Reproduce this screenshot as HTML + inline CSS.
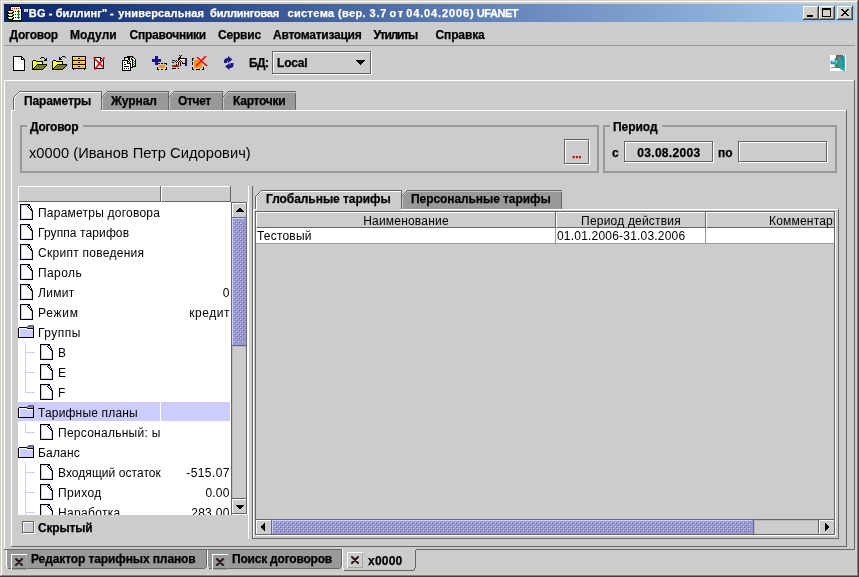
<!DOCTYPE html>
<html><head><meta charset="utf-8"><title>BG - биллинг</title>
<style>
html,body{margin:0;padding:0;background:#d4d0c8;overflow:hidden}
#w{position:relative;width:859px;height:577px;overflow:hidden;font-family:"Liberation Sans",sans-serif;font-size:12px;color:#000}
#g{position:absolute;left:0;top:0}
.t{position:absolute;white-space:nowrap;line-height:16px;font-size:12px}
.b{font-weight:bold;letter-spacing:-0.2px;-webkit-text-stroke:0.25px}
.p{font-weight:normal;letter-spacing:0.2px}
#lt{position:absolute;left:18px;top:202px;width:213px;height:313px;overflow:hidden;will-change:transform}
#tx{position:absolute;left:0;top:0;width:859px;height:577px;will-change:transform}
#lt .t{margin-left:-18px;margin-top:-202px}
</style></head><body>
<div id="w">
<svg id="g" width="859" height="577" viewBox="0 0 859 577" shape-rendering="crispEdges">
<rect x="0" y="0" width="859" height="577" fill="#d4d0c8"/>
<rect x="1" y="1" width="856" height="1" fill="#ffffff"/>
<rect x="1" y="1" width="1" height="574" fill="#ffffff"/>
<rect x="1" y="575" width="857" height="1" fill="#808080"/>
<rect x="857" y="1" width="1" height="575" fill="#808080"/>
<rect x="0" y="576" width="859" height="1" fill="#404040"/>
<rect x="858" y="0" width="1" height="577" fill="#404040"/>
<defs><linearGradient id="tg" x1="0" x2="1" y1="0" y2="0"><stop offset="0" stop-color="#0a246a"/><stop offset="1" stop-color="#a6caf0"/></linearGradient><pattern id="bumpv" x="234" y="221" width="4" height="4" patternUnits="userSpaceOnUse"><rect x="0" y="0" width="1" height="1" fill="#ccccff"/><rect x="2" y="2" width="1" height="1" fill="#ccccff"/><rect x="1" y="1" width="1" height="1" fill="#666699"/><rect x="3" y="3" width="1" height="1" fill="#666699"/></pattern><pattern id="bumph" x="275" y="522" width="4" height="4" patternUnits="userSpaceOnUse"><rect x="0" y="0" width="1" height="1" fill="#ccccff"/><rect x="2" y="2" width="1" height="1" fill="#ccccff"/><rect x="1" y="1" width="1" height="1" fill="#666699"/><rect x="3" y="3" width="1" height="1" fill="#666699"/></pattern></defs>
<rect x="4" y="4" width="851" height="18" fill="url(#tg)"/>
<rect x="4" y="22" width="851" height="551" fill="#cccccc"/>
<rect x="803" y="6" width="16" height="14" fill="#d4d0c8"/>
<rect x="803" y="6" width="15" height="1" fill="#ffffff"/>
<rect x="803" y="6" width="1" height="13" fill="#ffffff"/>
<rect x="803" y="19" width="16" height="1" fill="#404040"/>
<rect x="818" y="6" width="1" height="14" fill="#404040"/>
<rect x="804" y="18" width="14" height="1" fill="#808080"/>
<rect x="817" y="7" width="1" height="12" fill="#808080"/>
<rect x="819" y="6" width="16" height="14" fill="#d4d0c8"/>
<rect x="819" y="6" width="15" height="1" fill="#ffffff"/>
<rect x="819" y="6" width="1" height="13" fill="#ffffff"/>
<rect x="819" y="19" width="16" height="1" fill="#404040"/>
<rect x="834" y="6" width="1" height="14" fill="#404040"/>
<rect x="820" y="18" width="14" height="1" fill="#808080"/>
<rect x="833" y="7" width="1" height="12" fill="#808080"/>
<rect x="837" y="6" width="16" height="14" fill="#d4d0c8"/>
<rect x="837" y="6" width="15" height="1" fill="#ffffff"/>
<rect x="837" y="6" width="1" height="13" fill="#ffffff"/>
<rect x="837" y="19" width="16" height="1" fill="#404040"/>
<rect x="852" y="6" width="1" height="14" fill="#404040"/>
<rect x="838" y="18" width="14" height="1" fill="#808080"/>
<rect x="851" y="7" width="1" height="12" fill="#808080"/>
<rect x="807" y="15" width="6" height="2" fill="#000"/>
<rect x="822" y="8" width="9" height="9" fill="#000"/>
<rect x="823" y="10" width="7" height="6" fill="#d4d0c8"/>
<rect x="841" y="9" width="2" height="1" fill="#000"/>
<rect x="847" y="9" width="2" height="1" fill="#000"/>
<rect x="842" y="10" width="2" height="1" fill="#000"/>
<rect x="846" y="10" width="2" height="1" fill="#000"/>
<rect x="843" y="11" width="2" height="1" fill="#000"/>
<rect x="845" y="11" width="2" height="1" fill="#000"/>
<rect x="844" y="12" width="2" height="1" fill="#000"/>
<rect x="844" y="12" width="2" height="1" fill="#000"/>
<rect x="845" y="13" width="2" height="1" fill="#000"/>
<rect x="843" y="13" width="2" height="1" fill="#000"/>
<rect x="846" y="14" width="2" height="1" fill="#000"/>
<rect x="842" y="14" width="2" height="1" fill="#000"/>
<rect x="847" y="15" width="2" height="1" fill="#000"/>
<rect x="841" y="15" width="2" height="1" fill="#000"/>
<rect x="10" y="6" width="11" height="15" fill="#000"/>
<rect x="11" y="7" width="9" height="13" fill="#ffffff"/>
<rect x="20" y="8" width="2" height="13" fill="#000"/>
<rect x="20" y="9" width="1" height="11" fill="#ffffff"/>
<rect x="12" y="8" width="1" height="1" fill="#ff0000"/>
<rect x="14" y="8" width="1" height="1" fill="#ff0000"/>
<rect x="16" y="8" width="1" height="1" fill="#ff0000"/>
<rect x="18" y="8" width="1" height="1" fill="#ff0000"/>
<rect x="15" y="11" width="1" height="1" fill="#000"/>
<rect x="17" y="11" width="3" height="1" fill="#008000"/>
<rect x="18" y="10" width="1" height="3" fill="#008000"/>
<rect x="15" y="14" width="1" height="1" fill="#000"/>
<rect x="17" y="14" width="3" height="1" fill="#008000"/>
<rect x="18" y="13" width="1" height="3" fill="#008000"/>
<rect x="15" y="17" width="1" height="1" fill="#000"/>
<rect x="17" y="17" width="3" height="1" fill="#008000"/>
<rect x="18" y="16" width="1" height="3" fill="#008000"/>
<rect x="8" y="10" width="5" height="4" fill="#000"/>
<rect x="7" y="11" width="7" height="2" fill="#000"/>
<rect x="8" y="11" width="3" height="1" fill="#ffffff"/>
<rect x="11" y="11" width="2" height="1" fill="#ffff00"/>
<rect x="9" y="12" width="3" height="1" fill="#ffff00"/>
<rect x="8" y="13" width="5" height="4" fill="#000"/>
<rect x="7" y="14" width="7" height="2" fill="#000"/>
<rect x="8" y="14" width="3" height="1" fill="#ffffff"/>
<rect x="11" y="14" width="2" height="1" fill="#ffff00"/>
<rect x="9" y="15" width="3" height="1" fill="#ffff00"/>
<rect x="8" y="16" width="5" height="4" fill="#000"/>
<rect x="7" y="17" width="7" height="2" fill="#000"/>
<rect x="8" y="17" width="3" height="1" fill="#ffffff"/>
<rect x="11" y="17" width="2" height="1" fill="#ffff00"/>
<rect x="9" y="18" width="3" height="1" fill="#ffff00"/>
<rect x="4" y="45" width="851" height="1" fill="#999999"/>
<rect x="4" y="80" width="850" height="1" fill="#ffffff"/>
<rect x="4" y="80" width="1" height="469" fill="#ffffff"/>
<rect x="854" y="80" width="1" height="470" fill="#666666"/>
<rect x="4" y="549" width="851" height="1" fill="#666666"/>
<rect x="11" y="110" width="835" height="1" fill="#ffffff"/>
<polygon points="14,111 14,98 20,92 101,92 101,111" fill="#cccccc"/>
<rect x="13" y="97" width="1" height="1" fill="#666666"/>
<rect x="14" y="96" width="1" height="1" fill="#666666"/>
<rect x="15" y="95" width="1" height="1" fill="#666666"/>
<rect x="16" y="94" width="1" height="1" fill="#666666"/>
<rect x="17" y="93" width="1" height="1" fill="#666666"/>
<rect x="18" y="92" width="1" height="1" fill="#666666"/>
<rect x="19" y="91" width="1" height="1" fill="#666666"/>
<rect x="13" y="97" width="1" height="13" fill="#666666"/>
<rect x="19" y="91" width="83" height="1" fill="#666666"/>
<rect x="101" y="91" width="1" height="19" fill="#666666"/>
<rect x="15" y="96" width="1" height="1" fill="#ffffff"/>
<rect x="16" y="95" width="1" height="1" fill="#ffffff"/>
<rect x="17" y="94" width="1" height="1" fill="#ffffff"/>
<rect x="18" y="93" width="1" height="1" fill="#ffffff"/>
<rect x="19" y="92" width="1" height="1" fill="#ffffff"/>
<rect x="19" y="92" width="82" height="1" fill="#ffffff"/>
<rect x="14" y="97" width="1" height="14" fill="#ffffff"/>
<polygon points="102,110 102,98 108,92 168,92 168,110" fill="#999999"/>
<rect x="101" y="97" width="1" height="1" fill="#666666"/>
<rect x="102" y="96" width="1" height="1" fill="#666666"/>
<rect x="103" y="95" width="1" height="1" fill="#666666"/>
<rect x="104" y="94" width="1" height="1" fill="#666666"/>
<rect x="105" y="93" width="1" height="1" fill="#666666"/>
<rect x="106" y="92" width="1" height="1" fill="#666666"/>
<rect x="107" y="91" width="1" height="1" fill="#666666"/>
<rect x="107" y="91" width="62" height="1" fill="#666666"/>
<rect x="168" y="91" width="1" height="19" fill="#666666"/>
<rect x="103" y="96" width="1" height="1" fill="#c6c6c6"/>
<rect x="104" y="95" width="1" height="1" fill="#c6c6c6"/>
<rect x="105" y="94" width="1" height="1" fill="#c6c6c6"/>
<rect x="106" y="93" width="1" height="1" fill="#c6c6c6"/>
<rect x="107" y="92" width="1" height="1" fill="#c6c6c6"/>
<rect x="107" y="92" width="61" height="1" fill="#c6c6c6"/>
<rect x="102" y="98" width="1" height="12" fill="#c6c6c6"/>
<polygon points="169,110 169,98 175,92 222,92 222,110" fill="#999999"/>
<rect x="168" y="97" width="1" height="1" fill="#666666"/>
<rect x="169" y="96" width="1" height="1" fill="#666666"/>
<rect x="170" y="95" width="1" height="1" fill="#666666"/>
<rect x="171" y="94" width="1" height="1" fill="#666666"/>
<rect x="172" y="93" width="1" height="1" fill="#666666"/>
<rect x="173" y="92" width="1" height="1" fill="#666666"/>
<rect x="174" y="91" width="1" height="1" fill="#666666"/>
<rect x="174" y="91" width="49" height="1" fill="#666666"/>
<rect x="222" y="91" width="1" height="19" fill="#666666"/>
<rect x="170" y="96" width="1" height="1" fill="#c6c6c6"/>
<rect x="171" y="95" width="1" height="1" fill="#c6c6c6"/>
<rect x="172" y="94" width="1" height="1" fill="#c6c6c6"/>
<rect x="173" y="93" width="1" height="1" fill="#c6c6c6"/>
<rect x="174" y="92" width="1" height="1" fill="#c6c6c6"/>
<rect x="174" y="92" width="48" height="1" fill="#c6c6c6"/>
<rect x="169" y="98" width="1" height="12" fill="#c6c6c6"/>
<polygon points="223,110 223,98 229,92 295,92 295,110" fill="#999999"/>
<rect x="222" y="97" width="1" height="1" fill="#666666"/>
<rect x="223" y="96" width="1" height="1" fill="#666666"/>
<rect x="224" y="95" width="1" height="1" fill="#666666"/>
<rect x="225" y="94" width="1" height="1" fill="#666666"/>
<rect x="226" y="93" width="1" height="1" fill="#666666"/>
<rect x="227" y="92" width="1" height="1" fill="#666666"/>
<rect x="228" y="91" width="1" height="1" fill="#666666"/>
<rect x="228" y="91" width="68" height="1" fill="#666666"/>
<rect x="295" y="93" width="1" height="17" fill="#666666"/>
<rect x="224" y="96" width="1" height="1" fill="#c6c6c6"/>
<rect x="225" y="95" width="1" height="1" fill="#c6c6c6"/>
<rect x="226" y="94" width="1" height="1" fill="#c6c6c6"/>
<rect x="227" y="93" width="1" height="1" fill="#c6c6c6"/>
<rect x="228" y="92" width="1" height="1" fill="#c6c6c6"/>
<rect x="228" y="92" width="68" height="1" fill="#c6c6c6"/>
<rect x="223" y="98" width="1" height="12" fill="#c6c6c6"/>
<rect x="11" y="110" width="1" height="436" fill="#ffffff"/>
<rect x="846" y="110" width="1" height="437" fill="#666666"/>
<rect x="11" y="546" width="836" height="1" fill="#666666"/>
<rect x="20" y="125" width="2" height="48" fill="#999999"/>
<rect x="597" y="125" width="2" height="48" fill="#999999"/>
<rect x="20" y="171" width="579" height="2" fill="#999999"/>
<rect x="20" y="125" width="7" height="2" fill="#999999"/>
<rect x="83" y="125" width="516" height="2" fill="#999999"/>
<rect x="603" y="125" width="2" height="48" fill="#999999"/>
<rect x="835" y="125" width="2" height="48" fill="#999999"/>
<rect x="603" y="171" width="234" height="2" fill="#999999"/>
<rect x="603" y="125" width="7" height="2" fill="#999999"/>
<rect x="662" y="125" width="175" height="2" fill="#999999"/>
<rect x="564" y="139" width="25" height="1" fill="#666666"/>
<rect x="564" y="139" width="1" height="25" fill="#666666"/>
<rect x="564" y="163" width="25" height="1" fill="#666666"/>
<rect x="588" y="139" width="1" height="25" fill="#666666"/>
<rect x="565" y="140" width="23" height="1" fill="#ffffff"/>
<rect x="565" y="140" width="1" height="23" fill="#ffffff"/>
<rect x="565" y="164" width="25" height="1" fill="#ffffff"/>
<rect x="589" y="140" width="1" height="25" fill="#ffffff"/>
<rect x="624" y="141" width="89" height="1" fill="#666666"/>
<rect x="624" y="141" width="1" height="21" fill="#666666"/>
<rect x="624" y="161" width="89" height="1" fill="#666666"/>
<rect x="712" y="141" width="1" height="21" fill="#666666"/>
<rect x="625" y="142" width="87" height="1" fill="#ffffff"/>
<rect x="625" y="142" width="1" height="19" fill="#ffffff"/>
<rect x="625" y="162" width="89" height="1" fill="#ffffff"/>
<rect x="713" y="142" width="1" height="21" fill="#ffffff"/>
<rect x="738" y="141" width="89" height="1" fill="#666666"/>
<rect x="738" y="141" width="1" height="21" fill="#666666"/>
<rect x="738" y="161" width="89" height="1" fill="#666666"/>
<rect x="826" y="141" width="1" height="21" fill="#666666"/>
<rect x="739" y="142" width="87" height="1" fill="#ffffff"/>
<rect x="739" y="142" width="1" height="19" fill="#ffffff"/>
<rect x="739" y="162" width="89" height="1" fill="#ffffff"/>
<rect x="827" y="142" width="1" height="21" fill="#ffffff"/>
<rect x="272" y="51" width="99" height="1" fill="#666666"/>
<rect x="272" y="51" width="1" height="23" fill="#666666"/>
<rect x="272" y="73" width="99" height="1" fill="#666666"/>
<rect x="370" y="51" width="1" height="23" fill="#666666"/>
<rect x="273" y="52" width="97" height="1" fill="#ffffff"/>
<rect x="273" y="52" width="1" height="21" fill="#ffffff"/>
<rect x="273" y="74" width="99" height="1" fill="#ffffff"/>
<rect x="371" y="52" width="1" height="23" fill="#ffffff"/>
<polygon points="355,60 365,60 360,65" fill="#000"/>
<rect x="18" y="202" width="213" height="313" fill="#ffffff"/>
<rect x="18" y="186" width="143" height="16" fill="#cccccc"/>
<rect x="18" y="186" width="142" height="1" fill="#ffffff"/>
<rect x="18" y="186" width="1" height="15" fill="#ffffff"/>
<rect x="160" y="186" width="1" height="16" fill="#666666"/>
<rect x="19" y="201" width="142" height="1" fill="#666666"/>
<rect x="161" y="186" width="70" height="16" fill="#cccccc"/>
<rect x="161" y="186" width="69" height="1" fill="#ffffff"/>
<rect x="161" y="186" width="1" height="15" fill="#ffffff"/>
<rect x="230" y="186" width="1" height="16" fill="#666666"/>
<rect x="162" y="201" width="69" height="1" fill="#666666"/>
<rect x="18" y="402" width="142" height="19" fill="#ccccff"/>
<rect x="161" y="402" width="69" height="19" fill="#ccccff"/>
<clipPath id="lc"><rect x="18" y="202" width="213" height="313"/></clipPath><g clip-path="url(#lc)">
<rect x="25" y="342" width="1" height="51" fill="#ccccff"/>
<rect x="25" y="352" width="10" height="1" fill="#ccccff"/>
<rect x="25" y="372" width="10" height="1" fill="#ccccff"/>
<rect x="25" y="392" width="10" height="1" fill="#ccccff"/>
<rect x="25" y="422" width="1" height="11" fill="#ccccff"/>
<rect x="25" y="432" width="10" height="1" fill="#ccccff"/>
<rect x="25" y="462" width="1" height="59" fill="#ccccff"/>
<rect x="25" y="472" width="10" height="1" fill="#ccccff"/>
<rect x="25" y="492" width="10" height="1" fill="#ccccff"/>
<rect x="25" y="512" width="10" height="1" fill="#ccccff"/>
<rect x="21" y="205" width="11" height="14" fill="#ffffff"/>
<rect x="21" y="205" width="1" height="14" fill="#ccccff"/>
<rect x="21" y="205" width="7" height="1" fill="#ccccff"/>
<rect x="31" y="211" width="1" height="8" fill="#ccccff"/>
<rect x="21" y="218" width="11" height="1" fill="#ccccff"/>
<rect x="28" y="206" width="1" height="1" fill="#ccccff"/>
<rect x="29" y="207" width="1" height="1" fill="#ccccff"/>
<rect x="30" y="208" width="1" height="1" fill="#ccccff"/>
<rect x="20" y="204" width="1" height="16" fill="#000"/>
<rect x="20" y="204" width="10" height="1" fill="#000"/>
<rect x="20" y="219" width="13" height="1" fill="#000"/>
<rect x="32" y="210" width="1" height="10" fill="#000"/>
<rect x="27" y="206" width="1" height="1" fill="#000"/>
<rect x="28" y="207" width="1" height="1" fill="#000"/>
<rect x="29" y="208" width="1" height="1" fill="#000"/>
<rect x="30" y="209" width="1" height="1" fill="#000"/>
<rect x="31" y="210" width="1" height="1" fill="#000"/>
<rect x="28" y="205" width="2" height="1" fill="#000"/>
<rect x="30" y="206" width="1" height="2" fill="#000"/>
<rect x="31" y="208" width="1" height="2" fill="#000"/>
<rect x="21" y="225" width="11" height="14" fill="#ffffff"/>
<rect x="21" y="225" width="1" height="14" fill="#ccccff"/>
<rect x="21" y="225" width="7" height="1" fill="#ccccff"/>
<rect x="31" y="231" width="1" height="8" fill="#ccccff"/>
<rect x="21" y="238" width="11" height="1" fill="#ccccff"/>
<rect x="28" y="226" width="1" height="1" fill="#ccccff"/>
<rect x="29" y="227" width="1" height="1" fill="#ccccff"/>
<rect x="30" y="228" width="1" height="1" fill="#ccccff"/>
<rect x="20" y="224" width="1" height="16" fill="#000"/>
<rect x="20" y="224" width="10" height="1" fill="#000"/>
<rect x="20" y="239" width="13" height="1" fill="#000"/>
<rect x="32" y="230" width="1" height="10" fill="#000"/>
<rect x="27" y="226" width="1" height="1" fill="#000"/>
<rect x="28" y="227" width="1" height="1" fill="#000"/>
<rect x="29" y="228" width="1" height="1" fill="#000"/>
<rect x="30" y="229" width="1" height="1" fill="#000"/>
<rect x="31" y="230" width="1" height="1" fill="#000"/>
<rect x="28" y="225" width="2" height="1" fill="#000"/>
<rect x="30" y="226" width="1" height="2" fill="#000"/>
<rect x="31" y="228" width="1" height="2" fill="#000"/>
<rect x="21" y="245" width="11" height="14" fill="#ffffff"/>
<rect x="21" y="245" width="1" height="14" fill="#ccccff"/>
<rect x="21" y="245" width="7" height="1" fill="#ccccff"/>
<rect x="31" y="251" width="1" height="8" fill="#ccccff"/>
<rect x="21" y="258" width="11" height="1" fill="#ccccff"/>
<rect x="28" y="246" width="1" height="1" fill="#ccccff"/>
<rect x="29" y="247" width="1" height="1" fill="#ccccff"/>
<rect x="30" y="248" width="1" height="1" fill="#ccccff"/>
<rect x="20" y="244" width="1" height="16" fill="#000"/>
<rect x="20" y="244" width="10" height="1" fill="#000"/>
<rect x="20" y="259" width="13" height="1" fill="#000"/>
<rect x="32" y="250" width="1" height="10" fill="#000"/>
<rect x="27" y="246" width="1" height="1" fill="#000"/>
<rect x="28" y="247" width="1" height="1" fill="#000"/>
<rect x="29" y="248" width="1" height="1" fill="#000"/>
<rect x="30" y="249" width="1" height="1" fill="#000"/>
<rect x="31" y="250" width="1" height="1" fill="#000"/>
<rect x="28" y="245" width="2" height="1" fill="#000"/>
<rect x="30" y="246" width="1" height="2" fill="#000"/>
<rect x="31" y="248" width="1" height="2" fill="#000"/>
<rect x="21" y="265" width="11" height="14" fill="#ffffff"/>
<rect x="21" y="265" width="1" height="14" fill="#ccccff"/>
<rect x="21" y="265" width="7" height="1" fill="#ccccff"/>
<rect x="31" y="271" width="1" height="8" fill="#ccccff"/>
<rect x="21" y="278" width="11" height="1" fill="#ccccff"/>
<rect x="28" y="266" width="1" height="1" fill="#ccccff"/>
<rect x="29" y="267" width="1" height="1" fill="#ccccff"/>
<rect x="30" y="268" width="1" height="1" fill="#ccccff"/>
<rect x="20" y="264" width="1" height="16" fill="#000"/>
<rect x="20" y="264" width="10" height="1" fill="#000"/>
<rect x="20" y="279" width="13" height="1" fill="#000"/>
<rect x="32" y="270" width="1" height="10" fill="#000"/>
<rect x="27" y="266" width="1" height="1" fill="#000"/>
<rect x="28" y="267" width="1" height="1" fill="#000"/>
<rect x="29" y="268" width="1" height="1" fill="#000"/>
<rect x="30" y="269" width="1" height="1" fill="#000"/>
<rect x="31" y="270" width="1" height="1" fill="#000"/>
<rect x="28" y="265" width="2" height="1" fill="#000"/>
<rect x="30" y="266" width="1" height="2" fill="#000"/>
<rect x="31" y="268" width="1" height="2" fill="#000"/>
<rect x="21" y="285" width="11" height="14" fill="#ffffff"/>
<rect x="21" y="285" width="1" height="14" fill="#ccccff"/>
<rect x="21" y="285" width="7" height="1" fill="#ccccff"/>
<rect x="31" y="291" width="1" height="8" fill="#ccccff"/>
<rect x="21" y="298" width="11" height="1" fill="#ccccff"/>
<rect x="28" y="286" width="1" height="1" fill="#ccccff"/>
<rect x="29" y="287" width="1" height="1" fill="#ccccff"/>
<rect x="30" y="288" width="1" height="1" fill="#ccccff"/>
<rect x="20" y="284" width="1" height="16" fill="#000"/>
<rect x="20" y="284" width="10" height="1" fill="#000"/>
<rect x="20" y="299" width="13" height="1" fill="#000"/>
<rect x="32" y="290" width="1" height="10" fill="#000"/>
<rect x="27" y="286" width="1" height="1" fill="#000"/>
<rect x="28" y="287" width="1" height="1" fill="#000"/>
<rect x="29" y="288" width="1" height="1" fill="#000"/>
<rect x="30" y="289" width="1" height="1" fill="#000"/>
<rect x="31" y="290" width="1" height="1" fill="#000"/>
<rect x="28" y="285" width="2" height="1" fill="#000"/>
<rect x="30" y="286" width="1" height="2" fill="#000"/>
<rect x="31" y="288" width="1" height="2" fill="#000"/>
<rect x="21" y="305" width="11" height="14" fill="#ffffff"/>
<rect x="21" y="305" width="1" height="14" fill="#ccccff"/>
<rect x="21" y="305" width="7" height="1" fill="#ccccff"/>
<rect x="31" y="311" width="1" height="8" fill="#ccccff"/>
<rect x="21" y="318" width="11" height="1" fill="#ccccff"/>
<rect x="28" y="306" width="1" height="1" fill="#ccccff"/>
<rect x="29" y="307" width="1" height="1" fill="#ccccff"/>
<rect x="30" y="308" width="1" height="1" fill="#ccccff"/>
<rect x="20" y="304" width="1" height="16" fill="#000"/>
<rect x="20" y="304" width="10" height="1" fill="#000"/>
<rect x="20" y="319" width="13" height="1" fill="#000"/>
<rect x="32" y="310" width="1" height="10" fill="#000"/>
<rect x="27" y="306" width="1" height="1" fill="#000"/>
<rect x="28" y="307" width="1" height="1" fill="#000"/>
<rect x="29" y="308" width="1" height="1" fill="#000"/>
<rect x="30" y="309" width="1" height="1" fill="#000"/>
<rect x="31" y="310" width="1" height="1" fill="#000"/>
<rect x="28" y="305" width="2" height="1" fill="#000"/>
<rect x="30" y="306" width="1" height="2" fill="#000"/>
<rect x="31" y="308" width="1" height="2" fill="#000"/>
<rect x="28" y="325" width="6" height="1" fill="#666699"/>
<rect x="27" y="326" width="7" height="1" fill="#666699"/>
<rect x="20" y="329" width="13" height="8" fill="#ccccff"/>
<rect x="27" y="327" width="6" height="1" fill="#9999cc"/>
<rect x="18" y="328" width="1" height="10" fill="#000"/>
<rect x="19" y="327" width="8" height="1" fill="#000"/>
<rect x="27" y="328" width="6" height="1" fill="#000"/>
<rect x="33" y="327" width="1" height="11" fill="#000"/>
<rect x="18" y="337" width="16" height="1" fill="#000"/>
<rect x="19" y="328" width="1" height="9" fill="#ffffff"/>
<rect x="19" y="328" width="8" height="1" fill="#ffffff"/>
<rect x="27" y="329" width="6" height="1" fill="#ffffff"/>
<rect x="41" y="345" width="11" height="14" fill="#ffffff"/>
<rect x="41" y="345" width="1" height="14" fill="#ccccff"/>
<rect x="41" y="345" width="7" height="1" fill="#ccccff"/>
<rect x="51" y="351" width="1" height="8" fill="#ccccff"/>
<rect x="41" y="358" width="11" height="1" fill="#ccccff"/>
<rect x="48" y="346" width="1" height="1" fill="#ccccff"/>
<rect x="49" y="347" width="1" height="1" fill="#ccccff"/>
<rect x="50" y="348" width="1" height="1" fill="#ccccff"/>
<rect x="40" y="344" width="1" height="16" fill="#000"/>
<rect x="40" y="344" width="10" height="1" fill="#000"/>
<rect x="40" y="359" width="13" height="1" fill="#000"/>
<rect x="52" y="350" width="1" height="10" fill="#000"/>
<rect x="47" y="346" width="1" height="1" fill="#000"/>
<rect x="48" y="347" width="1" height="1" fill="#000"/>
<rect x="49" y="348" width="1" height="1" fill="#000"/>
<rect x="50" y="349" width="1" height="1" fill="#000"/>
<rect x="51" y="350" width="1" height="1" fill="#000"/>
<rect x="48" y="345" width="2" height="1" fill="#000"/>
<rect x="50" y="346" width="1" height="2" fill="#000"/>
<rect x="51" y="348" width="1" height="2" fill="#000"/>
<rect x="41" y="365" width="11" height="14" fill="#ffffff"/>
<rect x="41" y="365" width="1" height="14" fill="#ccccff"/>
<rect x="41" y="365" width="7" height="1" fill="#ccccff"/>
<rect x="51" y="371" width="1" height="8" fill="#ccccff"/>
<rect x="41" y="378" width="11" height="1" fill="#ccccff"/>
<rect x="48" y="366" width="1" height="1" fill="#ccccff"/>
<rect x="49" y="367" width="1" height="1" fill="#ccccff"/>
<rect x="50" y="368" width="1" height="1" fill="#ccccff"/>
<rect x="40" y="364" width="1" height="16" fill="#000"/>
<rect x="40" y="364" width="10" height="1" fill="#000"/>
<rect x="40" y="379" width="13" height="1" fill="#000"/>
<rect x="52" y="370" width="1" height="10" fill="#000"/>
<rect x="47" y="366" width="1" height="1" fill="#000"/>
<rect x="48" y="367" width="1" height="1" fill="#000"/>
<rect x="49" y="368" width="1" height="1" fill="#000"/>
<rect x="50" y="369" width="1" height="1" fill="#000"/>
<rect x="51" y="370" width="1" height="1" fill="#000"/>
<rect x="48" y="365" width="2" height="1" fill="#000"/>
<rect x="50" y="366" width="1" height="2" fill="#000"/>
<rect x="51" y="368" width="1" height="2" fill="#000"/>
<rect x="41" y="385" width="11" height="14" fill="#ffffff"/>
<rect x="41" y="385" width="1" height="14" fill="#ccccff"/>
<rect x="41" y="385" width="7" height="1" fill="#ccccff"/>
<rect x="51" y="391" width="1" height="8" fill="#ccccff"/>
<rect x="41" y="398" width="11" height="1" fill="#ccccff"/>
<rect x="48" y="386" width="1" height="1" fill="#ccccff"/>
<rect x="49" y="387" width="1" height="1" fill="#ccccff"/>
<rect x="50" y="388" width="1" height="1" fill="#ccccff"/>
<rect x="40" y="384" width="1" height="16" fill="#000"/>
<rect x="40" y="384" width="10" height="1" fill="#000"/>
<rect x="40" y="399" width="13" height="1" fill="#000"/>
<rect x="52" y="390" width="1" height="10" fill="#000"/>
<rect x="47" y="386" width="1" height="1" fill="#000"/>
<rect x="48" y="387" width="1" height="1" fill="#000"/>
<rect x="49" y="388" width="1" height="1" fill="#000"/>
<rect x="50" y="389" width="1" height="1" fill="#000"/>
<rect x="51" y="390" width="1" height="1" fill="#000"/>
<rect x="48" y="385" width="2" height="1" fill="#000"/>
<rect x="50" y="386" width="1" height="2" fill="#000"/>
<rect x="51" y="388" width="1" height="2" fill="#000"/>
<rect x="28" y="405" width="6" height="1" fill="#666699"/>
<rect x="27" y="406" width="7" height="1" fill="#666699"/>
<rect x="20" y="409" width="13" height="8" fill="#ccccff"/>
<rect x="27" y="407" width="6" height="1" fill="#9999cc"/>
<rect x="18" y="408" width="1" height="10" fill="#000"/>
<rect x="19" y="407" width="8" height="1" fill="#000"/>
<rect x="27" y="408" width="6" height="1" fill="#000"/>
<rect x="33" y="407" width="1" height="11" fill="#000"/>
<rect x="18" y="417" width="16" height="1" fill="#000"/>
<rect x="19" y="408" width="1" height="9" fill="#ffffff"/>
<rect x="19" y="408" width="8" height="1" fill="#ffffff"/>
<rect x="27" y="409" width="6" height="1" fill="#ffffff"/>
<rect x="41" y="425" width="11" height="14" fill="#ffffff"/>
<rect x="41" y="425" width="1" height="14" fill="#ccccff"/>
<rect x="41" y="425" width="7" height="1" fill="#ccccff"/>
<rect x="51" y="431" width="1" height="8" fill="#ccccff"/>
<rect x="41" y="438" width="11" height="1" fill="#ccccff"/>
<rect x="48" y="426" width="1" height="1" fill="#ccccff"/>
<rect x="49" y="427" width="1" height="1" fill="#ccccff"/>
<rect x="50" y="428" width="1" height="1" fill="#ccccff"/>
<rect x="40" y="424" width="1" height="16" fill="#000"/>
<rect x="40" y="424" width="10" height="1" fill="#000"/>
<rect x="40" y="439" width="13" height="1" fill="#000"/>
<rect x="52" y="430" width="1" height="10" fill="#000"/>
<rect x="47" y="426" width="1" height="1" fill="#000"/>
<rect x="48" y="427" width="1" height="1" fill="#000"/>
<rect x="49" y="428" width="1" height="1" fill="#000"/>
<rect x="50" y="429" width="1" height="1" fill="#000"/>
<rect x="51" y="430" width="1" height="1" fill="#000"/>
<rect x="48" y="425" width="2" height="1" fill="#000"/>
<rect x="50" y="426" width="1" height="2" fill="#000"/>
<rect x="51" y="428" width="1" height="2" fill="#000"/>
<rect x="28" y="445" width="6" height="1" fill="#666699"/>
<rect x="27" y="446" width="7" height="1" fill="#666699"/>
<rect x="20" y="449" width="13" height="8" fill="#ccccff"/>
<rect x="27" y="447" width="6" height="1" fill="#9999cc"/>
<rect x="18" y="448" width="1" height="10" fill="#000"/>
<rect x="19" y="447" width="8" height="1" fill="#000"/>
<rect x="27" y="448" width="6" height="1" fill="#000"/>
<rect x="33" y="447" width="1" height="11" fill="#000"/>
<rect x="18" y="457" width="16" height="1" fill="#000"/>
<rect x="19" y="448" width="1" height="9" fill="#ffffff"/>
<rect x="19" y="448" width="8" height="1" fill="#ffffff"/>
<rect x="27" y="449" width="6" height="1" fill="#ffffff"/>
<rect x="41" y="465" width="11" height="14" fill="#ffffff"/>
<rect x="41" y="465" width="1" height="14" fill="#ccccff"/>
<rect x="41" y="465" width="7" height="1" fill="#ccccff"/>
<rect x="51" y="471" width="1" height="8" fill="#ccccff"/>
<rect x="41" y="478" width="11" height="1" fill="#ccccff"/>
<rect x="48" y="466" width="1" height="1" fill="#ccccff"/>
<rect x="49" y="467" width="1" height="1" fill="#ccccff"/>
<rect x="50" y="468" width="1" height="1" fill="#ccccff"/>
<rect x="40" y="464" width="1" height="16" fill="#000"/>
<rect x="40" y="464" width="10" height="1" fill="#000"/>
<rect x="40" y="479" width="13" height="1" fill="#000"/>
<rect x="52" y="470" width="1" height="10" fill="#000"/>
<rect x="47" y="466" width="1" height="1" fill="#000"/>
<rect x="48" y="467" width="1" height="1" fill="#000"/>
<rect x="49" y="468" width="1" height="1" fill="#000"/>
<rect x="50" y="469" width="1" height="1" fill="#000"/>
<rect x="51" y="470" width="1" height="1" fill="#000"/>
<rect x="48" y="465" width="2" height="1" fill="#000"/>
<rect x="50" y="466" width="1" height="2" fill="#000"/>
<rect x="51" y="468" width="1" height="2" fill="#000"/>
<rect x="41" y="485" width="11" height="14" fill="#ffffff"/>
<rect x="41" y="485" width="1" height="14" fill="#ccccff"/>
<rect x="41" y="485" width="7" height="1" fill="#ccccff"/>
<rect x="51" y="491" width="1" height="8" fill="#ccccff"/>
<rect x="41" y="498" width="11" height="1" fill="#ccccff"/>
<rect x="48" y="486" width="1" height="1" fill="#ccccff"/>
<rect x="49" y="487" width="1" height="1" fill="#ccccff"/>
<rect x="50" y="488" width="1" height="1" fill="#ccccff"/>
<rect x="40" y="484" width="1" height="16" fill="#000"/>
<rect x="40" y="484" width="10" height="1" fill="#000"/>
<rect x="40" y="499" width="13" height="1" fill="#000"/>
<rect x="52" y="490" width="1" height="10" fill="#000"/>
<rect x="47" y="486" width="1" height="1" fill="#000"/>
<rect x="48" y="487" width="1" height="1" fill="#000"/>
<rect x="49" y="488" width="1" height="1" fill="#000"/>
<rect x="50" y="489" width="1" height="1" fill="#000"/>
<rect x="51" y="490" width="1" height="1" fill="#000"/>
<rect x="48" y="485" width="2" height="1" fill="#000"/>
<rect x="50" y="486" width="1" height="2" fill="#000"/>
<rect x="51" y="488" width="1" height="2" fill="#000"/>
<rect x="41" y="505" width="11" height="14" fill="#ffffff"/>
<rect x="41" y="505" width="1" height="14" fill="#ccccff"/>
<rect x="41" y="505" width="7" height="1" fill="#ccccff"/>
<rect x="51" y="511" width="1" height="8" fill="#ccccff"/>
<rect x="41" y="518" width="11" height="1" fill="#ccccff"/>
<rect x="48" y="506" width="1" height="1" fill="#ccccff"/>
<rect x="49" y="507" width="1" height="1" fill="#ccccff"/>
<rect x="50" y="508" width="1" height="1" fill="#ccccff"/>
<rect x="40" y="504" width="1" height="16" fill="#000"/>
<rect x="40" y="504" width="10" height="1" fill="#000"/>
<rect x="40" y="519" width="13" height="1" fill="#000"/>
<rect x="52" y="510" width="1" height="10" fill="#000"/>
<rect x="47" y="506" width="1" height="1" fill="#000"/>
<rect x="48" y="507" width="1" height="1" fill="#000"/>
<rect x="49" y="508" width="1" height="1" fill="#000"/>
<rect x="50" y="509" width="1" height="1" fill="#000"/>
<rect x="51" y="510" width="1" height="1" fill="#000"/>
<rect x="48" y="505" width="2" height="1" fill="#000"/>
<rect x="50" y="506" width="1" height="2" fill="#000"/>
<rect x="51" y="508" width="1" height="2" fill="#000"/>
</g>
<rect x="231" y="202" width="17" height="313" fill="#cccccc"/>
<rect x="231" y="202" width="1" height="313" fill="#666666"/>
<rect x="246" y="202" width="1" height="313" fill="#666666"/>
<rect x="247" y="202" width="1" height="313" fill="#ffffff"/>
<rect x="231" y="202" width="16" height="1" fill="#666666"/>
<rect x="232" y="203" width="14" height="1" fill="#ffffff"/>
<rect x="232" y="203" width="1" height="14" fill="#ffffff"/>
<rect x="232" y="346" width="1" height="152" fill="#b8b8b8"/>
<rect x="232" y="346" width="14" height="1" fill="#b8b8b8"/>
<rect x="239" y="208" width="2" height="1" fill="#000"/>
<rect x="238" y="209" width="4" height="1" fill="#000"/>
<rect x="237" y="210" width="6" height="1" fill="#000"/>
<rect x="236" y="211" width="8" height="1" fill="#000"/>
<rect x="231" y="217" width="16" height="129" fill="#9999cc"/>
<rect x="231" y="217" width="16" height="1" fill="#666699"/>
<rect x="231" y="345" width="16" height="1" fill="#666699"/>
<rect x="231" y="217" width="1" height="129" fill="#666699"/>
<rect x="246" y="217" width="1" height="129" fill="#666699"/>
<rect x="232" y="218" width="13" height="1" fill="#ccccff"/>
<rect x="232" y="218" width="1" height="127" fill="#ccccff"/>
<rect x="234" y="221" width="10" height="121" fill="url(#bumpv)"/>
<rect x="231" y="498" width="16" height="1" fill="#666666"/>
<rect x="232" y="499" width="14" height="1" fill="#ffffff"/>
<rect x="232" y="499" width="1" height="15" fill="#ffffff"/>
<rect x="231" y="513" width="16" height="1" fill="#666666"/>
<rect x="232" y="514" width="16" height="1" fill="#ffffff"/>
<rect x="236" y="505" width="8" height="1" fill="#000"/>
<rect x="237" y="506" width="6" height="1" fill="#000"/>
<rect x="238" y="507" width="4" height="1" fill="#000"/>
<rect x="239" y="508" width="2" height="1" fill="#000"/>
<rect x="248" y="186" width="1" height="353" fill="#ffffff"/>
<rect x="252" y="186" width="1" height="353" fill="#666666"/>
<rect x="22" y="521" width="12" height="1" fill="#666666"/>
<rect x="22" y="521" width="1" height="12" fill="#666666"/>
<rect x="22" y="532" width="12" height="1" fill="#666666"/>
<rect x="33" y="521" width="1" height="12" fill="#666666"/>
<rect x="23" y="522" width="10" height="1" fill="#ffffff"/>
<rect x="23" y="522" width="1" height="10" fill="#ffffff"/>
<rect x="23" y="533" width="12" height="1" fill="#ffffff"/>
<rect x="34" y="522" width="1" height="12" fill="#ffffff"/>
<rect x="253" y="209" width="585" height="1" fill="#ffffff"/>
<polygon points="256,210 256,197 262,191 401,191 401,210" fill="#cccccc"/>
<rect x="255" y="196" width="1" height="1" fill="#666666"/>
<rect x="256" y="195" width="1" height="1" fill="#666666"/>
<rect x="257" y="194" width="1" height="1" fill="#666666"/>
<rect x="258" y="193" width="1" height="1" fill="#666666"/>
<rect x="259" y="192" width="1" height="1" fill="#666666"/>
<rect x="260" y="191" width="1" height="1" fill="#666666"/>
<rect x="261" y="190" width="1" height="1" fill="#666666"/>
<rect x="255" y="196" width="1" height="13" fill="#666666"/>
<rect x="261" y="190" width="141" height="1" fill="#666666"/>
<rect x="401" y="190" width="1" height="19" fill="#666666"/>
<rect x="257" y="195" width="1" height="1" fill="#ffffff"/>
<rect x="258" y="194" width="1" height="1" fill="#ffffff"/>
<rect x="259" y="193" width="1" height="1" fill="#ffffff"/>
<rect x="260" y="192" width="1" height="1" fill="#ffffff"/>
<rect x="261" y="191" width="1" height="1" fill="#ffffff"/>
<rect x="261" y="191" width="140" height="1" fill="#ffffff"/>
<rect x="256" y="196" width="1" height="14" fill="#ffffff"/>
<polygon points="402,209 402,197 408,191 561,191 561,209" fill="#999999"/>
<rect x="401" y="196" width="1" height="1" fill="#666666"/>
<rect x="402" y="195" width="1" height="1" fill="#666666"/>
<rect x="403" y="194" width="1" height="1" fill="#666666"/>
<rect x="404" y="193" width="1" height="1" fill="#666666"/>
<rect x="405" y="192" width="1" height="1" fill="#666666"/>
<rect x="406" y="191" width="1" height="1" fill="#666666"/>
<rect x="407" y="190" width="1" height="1" fill="#666666"/>
<rect x="407" y="190" width="155" height="1" fill="#666666"/>
<rect x="561" y="192" width="1" height="17" fill="#666666"/>
<rect x="403" y="195" width="1" height="1" fill="#c6c6c6"/>
<rect x="404" y="194" width="1" height="1" fill="#c6c6c6"/>
<rect x="405" y="193" width="1" height="1" fill="#c6c6c6"/>
<rect x="406" y="192" width="1" height="1" fill="#c6c6c6"/>
<rect x="407" y="191" width="1" height="1" fill="#c6c6c6"/>
<rect x="407" y="191" width="155" height="1" fill="#c6c6c6"/>
<rect x="402" y="197" width="1" height="12" fill="#c6c6c6"/>
<rect x="253" y="209" width="1" height="329" fill="#ffffff"/>
<rect x="838" y="209" width="1" height="330" fill="#666666"/>
<rect x="252" y="538" width="587" height="1" fill="#666666"/>
<rect x="255" y="211" width="580" height="1" fill="#666666"/>
<rect x="255" y="211" width="1" height="324" fill="#666666"/>
<rect x="255" y="534" width="580" height="1" fill="#666666"/>
<rect x="834" y="211" width="1" height="324" fill="#666666"/>
<rect x="835" y="212" width="1" height="324" fill="#ffffff"/>
<rect x="256" y="535" width="580" height="1" fill="#ffffff"/>
<rect x="256" y="212" width="300" height="16" fill="#cccccc"/>
<rect x="256" y="212" width="299" height="1" fill="#ffffff"/>
<rect x="256" y="212" width="1" height="15" fill="#ffffff"/>
<rect x="555" y="212" width="1" height="16" fill="#666666"/>
<rect x="257" y="227" width="299" height="1" fill="#666666"/>
<rect x="556" y="212" width="150" height="16" fill="#cccccc"/>
<rect x="556" y="212" width="149" height="1" fill="#ffffff"/>
<rect x="556" y="212" width="1" height="15" fill="#ffffff"/>
<rect x="705" y="212" width="1" height="16" fill="#666666"/>
<rect x="557" y="227" width="149" height="1" fill="#666666"/>
<rect x="706" y="212" width="128" height="16" fill="#cccccc"/>
<rect x="706" y="212" width="128" height="1" fill="#ffffff"/>
<rect x="706" y="212" width="1" height="15" fill="#ffffff"/>
<rect x="707" y="227" width="127" height="1" fill="#666666"/>
<rect x="256" y="228" width="578" height="15" fill="#ffffff"/>
<rect x="256" y="243" width="578" height="1" fill="#999999"/>
<rect x="555" y="228" width="1" height="16" fill="#999999"/>
<rect x="705" y="228" width="1" height="16" fill="#999999"/>
<rect x="256" y="519" width="578" height="1" fill="#666666"/>
<rect x="256" y="520" width="15" height="1" fill="#ffffff"/>
<rect x="256" y="520" width="1" height="14" fill="#ffffff"/>
<rect x="261" y="526" width="1" height="2" fill="#000"/>
<rect x="262" y="525" width="1" height="4" fill="#000"/>
<rect x="263" y="524" width="1" height="6" fill="#000"/>
<rect x="264" y="523" width="1" height="8" fill="#000"/>
<rect x="271" y="519" width="483" height="15" fill="#9999cc"/>
<rect x="271" y="519" width="483" height="1" fill="#666699"/>
<rect x="271" y="519" width="1" height="15" fill="#666699"/>
<rect x="753" y="519" width="1" height="15" fill="#666699"/>
<rect x="272" y="520" width="480" height="1" fill="#ccccff"/>
<rect x="272" y="520" width="1" height="13" fill="#ccccff"/>
<rect x="275" y="522" width="475" height="10" fill="url(#bumph)"/>
<rect x="754" y="520" width="64" height="1" fill="#b8b8b8"/>
<rect x="754" y="520" width="1" height="14" fill="#b8b8b8"/>
<rect x="818" y="519" width="1" height="15" fill="#666666"/>
<rect x="819" y="520" width="1" height="14" fill="#ffffff"/>
<rect x="819" y="520" width="14" height="1" fill="#ffffff"/>
<rect x="828" y="526" width="1" height="2" fill="#000"/>
<rect x="827" y="525" width="1" height="4" fill="#000"/>
<rect x="826" y="524" width="1" height="6" fill="#000"/>
<rect x="825" y="523" width="1" height="8" fill="#000"/>
<rect x="7" y="550" width="199" height="17" fill="#999999"/>
<rect x="8" y="567" width="197" height="1" fill="#999999"/>
<rect x="6" y="550" width="1" height="17" fill="#ffffff"/>
<rect x="7" y="567" width="1" height="1" fill="#e0e0e0"/>
<rect x="206" y="550" width="1" height="17" fill="#666666"/>
<rect x="205" y="567" width="1" height="1" fill="#666666"/>
<rect x="8" y="568" width="197" height="1" fill="#666666"/>
<rect x="208" y="550" width="133" height="17" fill="#999999"/>
<rect x="209" y="567" width="131" height="1" fill="#999999"/>
<rect x="207" y="550" width="1" height="17" fill="#ffffff"/>
<rect x="208" y="567" width="1" height="1" fill="#e0e0e0"/>
<rect x="341" y="550" width="1" height="17" fill="#666666"/>
<rect x="340" y="567" width="1" height="1" fill="#666666"/>
<rect x="209" y="568" width="131" height="1" fill="#666666"/>
<rect x="342" y="549" width="74" height="21" fill="#cccccc"/>
<rect x="342" y="549" width="1" height="19" fill="#ffffff"/>
<rect x="343" y="568" width="1" height="1" fill="#ffffff"/>
<rect x="343" y="569" width="1" height="1" fill="#ffffff"/>
<rect x="344" y="570" width="70" height="1" fill="#666666"/>
<rect x="415" y="550" width="1" height="18" fill="#666666"/>
<rect x="414" y="568" width="1" height="1" fill="#666666"/>
<rect x="414" y="569" width="1" height="1" fill="#666666"/>
<rect x="11" y="554" width="16" height="1" fill="#ffffff"/>
<rect x="11" y="554" width="1" height="16" fill="#ffffff"/>
<rect x="12" y="569" width="15" height="1" fill="#aaa69c"/>
<rect x="26" y="555" width="1" height="15" fill="#aaa69c"/>
<path d="M16,559 L22,565 M22,559 L16,565" stroke="#2a1a1a" stroke-width="2.1" stroke-linecap="round" fill="none" shape-rendering="auto"/>
<rect x="212" y="554" width="16" height="1" fill="#ffffff"/>
<rect x="212" y="554" width="1" height="16" fill="#ffffff"/>
<rect x="213" y="569" width="15" height="1" fill="#aaa69c"/>
<rect x="227" y="555" width="1" height="15" fill="#aaa69c"/>
<path d="M217,559 L223,565 M223,559 L217,565" stroke="#2a1a1a" stroke-width="2.1" stroke-linecap="round" fill="none" shape-rendering="auto"/>
<rect x="347" y="552" width="16" height="1" fill="#ffffff"/>
<rect x="347" y="552" width="1" height="16" fill="#ffffff"/>
<rect x="348" y="567" width="15" height="1" fill="#aaa69c"/>
<rect x="362" y="553" width="1" height="15" fill="#aaa69c"/>
<path d="M352,557 L358,563 M358,557 L352,563" stroke="#2a1a1a" stroke-width="2.1" stroke-linecap="round" fill="none" shape-rendering="auto"/>
<path d="M13.5,56.5 H21.5 L24.5,59.5 V70.5 H13.5 Z" fill="#fff" stroke="#000" stroke-width="1"/>
<path d="M21.5,56.5 V59.5 H24.5" fill="none" stroke="#000"/>
<rect x="33" y="60" width="3" height="1" fill="#000000"/>
<rect x="32" y="61" width="1" height="1" fill="#000000"/>
<rect x="33" y="61" width="1" height="1" fill="#ffff00"/>
<rect x="34" y="61" width="1" height="1" fill="#ffffff"/>
<rect x="35" y="61" width="1" height="1" fill="#ffff00"/>
<rect x="36" y="61" width="7" height="1" fill="#000000"/>
<rect x="32" y="62" width="1" height="1" fill="#000000"/>
<rect x="33" y="62" width="1" height="1" fill="#ffffff"/>
<rect x="34" y="62" width="1" height="1" fill="#ffff00"/>
<rect x="35" y="62" width="1" height="1" fill="#ffffff"/>
<rect x="36" y="62" width="1" height="1" fill="#ffff00"/>
<rect x="37" y="62" width="1" height="1" fill="#ffffff"/>
<rect x="38" y="62" width="1" height="1" fill="#ffff00"/>
<rect x="39" y="62" width="1" height="1" fill="#ffffff"/>
<rect x="40" y="62" width="1" height="1" fill="#ffff00"/>
<rect x="41" y="62" width="1" height="1" fill="#ffffff"/>
<rect x="42" y="62" width="1" height="1" fill="#000000"/>
<rect x="32" y="63" width="1" height="1" fill="#000000"/>
<rect x="33" y="63" width="1" height="1" fill="#ffff00"/>
<rect x="34" y="63" width="1" height="1" fill="#ffffff"/>
<rect x="35" y="63" width="1" height="1" fill="#ffff00"/>
<rect x="36" y="63" width="1" height="1" fill="#ffffff"/>
<rect x="37" y="63" width="1" height="1" fill="#ffff00"/>
<rect x="38" y="63" width="1" height="1" fill="#ffffff"/>
<rect x="39" y="63" width="1" height="1" fill="#ffff00"/>
<rect x="40" y="63" width="1" height="1" fill="#ffffff"/>
<rect x="41" y="63" width="1" height="1" fill="#ffff00"/>
<rect x="42" y="63" width="1" height="1" fill="#000000"/>
<rect x="32" y="64" width="1" height="1" fill="#000000"/>
<rect x="33" y="64" width="1" height="1" fill="#ffffff"/>
<rect x="34" y="64" width="1" height="1" fill="#ffff00"/>
<rect x="35" y="64" width="1" height="1" fill="#ffffff"/>
<rect x="36" y="64" width="1" height="1" fill="#ffff00"/>
<rect x="37" y="64" width="10" height="1" fill="#000000"/>
<rect x="32" y="65" width="1" height="1" fill="#000000"/>
<rect x="33" y="65" width="1" height="1" fill="#ffff00"/>
<rect x="34" y="65" width="1" height="1" fill="#ffffff"/>
<rect x="35" y="65" width="1" height="1" fill="#ffff00"/>
<rect x="36" y="65" width="1" height="1" fill="#000000"/>
<rect x="37" y="65" width="9" height="1" fill="#808000"/>
<rect x="46" y="65" width="1" height="1" fill="#000000"/>
<rect x="32" y="66" width="1" height="1" fill="#000000"/>
<rect x="33" y="66" width="1" height="1" fill="#ffffff"/>
<rect x="34" y="66" width="1" height="1" fill="#ffff00"/>
<rect x="35" y="66" width="1" height="1" fill="#000000"/>
<rect x="36" y="66" width="9" height="1" fill="#808000"/>
<rect x="45" y="66" width="1" height="1" fill="#000000"/>
<rect x="32" y="67" width="1" height="1" fill="#000000"/>
<rect x="33" y="67" width="1" height="1" fill="#ffff00"/>
<rect x="34" y="67" width="1" height="1" fill="#000000"/>
<rect x="35" y="67" width="9" height="1" fill="#808000"/>
<rect x="44" y="67" width="1" height="1" fill="#000000"/>
<rect x="32" y="68" width="2" height="1" fill="#000000"/>
<rect x="34" y="68" width="9" height="1" fill="#808000"/>
<rect x="43" y="68" width="1" height="1" fill="#000000"/>
<rect x="32" y="69" width="11" height="1" fill="#000000"/>
<rect x="41" y="57" width="3" height="1" fill="#000000"/>
<rect x="40" y="58" width="1" height="1" fill="#000000"/>
<rect x="44" y="58" width="1" height="1" fill="#000000"/>
<rect x="46" y="58" width="1" height="1" fill="#000000"/>
<rect x="45" y="59" width="2" height="1" fill="#000000"/>
<rect x="44" y="60" width="3" height="1" fill="#000000"/>
<rect x="53" y="60" width="3" height="1" fill="#000000"/>
<rect x="52" y="61" width="1" height="1" fill="#000000"/>
<rect x="53" y="61" width="1" height="1" fill="#ffff00"/>
<rect x="54" y="61" width="1" height="1" fill="#ffffff"/>
<rect x="55" y="61" width="1" height="1" fill="#ffff00"/>
<rect x="56" y="61" width="7" height="1" fill="#000000"/>
<rect x="52" y="62" width="1" height="1" fill="#000000"/>
<rect x="53" y="62" width="1" height="1" fill="#ffffff"/>
<rect x="54" y="62" width="1" height="1" fill="#ffff00"/>
<rect x="55" y="62" width="1" height="1" fill="#ffffff"/>
<rect x="56" y="62" width="1" height="1" fill="#ffff00"/>
<rect x="57" y="62" width="1" height="1" fill="#ffffff"/>
<rect x="58" y="62" width="1" height="1" fill="#ffff00"/>
<rect x="59" y="62" width="1" height="1" fill="#ffffff"/>
<rect x="60" y="62" width="1" height="1" fill="#ffff00"/>
<rect x="61" y="62" width="1" height="1" fill="#ffffff"/>
<rect x="62" y="62" width="1" height="1" fill="#000000"/>
<rect x="52" y="63" width="1" height="1" fill="#000000"/>
<rect x="53" y="63" width="1" height="1" fill="#ffff00"/>
<rect x="54" y="63" width="1" height="1" fill="#ffffff"/>
<rect x="55" y="63" width="1" height="1" fill="#ffff00"/>
<rect x="56" y="63" width="1" height="1" fill="#ffffff"/>
<rect x="57" y="63" width="1" height="1" fill="#ffff00"/>
<rect x="58" y="63" width="1" height="1" fill="#ffffff"/>
<rect x="59" y="63" width="1" height="1" fill="#ffff00"/>
<rect x="60" y="63" width="1" height="1" fill="#ffffff"/>
<rect x="61" y="63" width="1" height="1" fill="#ffff00"/>
<rect x="62" y="63" width="1" height="1" fill="#000000"/>
<rect x="52" y="64" width="1" height="1" fill="#000000"/>
<rect x="53" y="64" width="1" height="1" fill="#ffffff"/>
<rect x="54" y="64" width="1" height="1" fill="#ffff00"/>
<rect x="55" y="64" width="1" height="1" fill="#ffffff"/>
<rect x="56" y="64" width="1" height="1" fill="#ffff00"/>
<rect x="57" y="64" width="10" height="1" fill="#000000"/>
<rect x="52" y="65" width="1" height="1" fill="#000000"/>
<rect x="53" y="65" width="1" height="1" fill="#ffff00"/>
<rect x="54" y="65" width="1" height="1" fill="#ffffff"/>
<rect x="55" y="65" width="1" height="1" fill="#ffff00"/>
<rect x="56" y="65" width="1" height="1" fill="#000000"/>
<rect x="57" y="65" width="9" height="1" fill="#808000"/>
<rect x="66" y="65" width="1" height="1" fill="#000000"/>
<rect x="52" y="66" width="1" height="1" fill="#000000"/>
<rect x="53" y="66" width="1" height="1" fill="#ffffff"/>
<rect x="54" y="66" width="1" height="1" fill="#ffff00"/>
<rect x="55" y="66" width="1" height="1" fill="#000000"/>
<rect x="56" y="66" width="9" height="1" fill="#808000"/>
<rect x="65" y="66" width="1" height="1" fill="#000000"/>
<rect x="52" y="67" width="1" height="1" fill="#000000"/>
<rect x="53" y="67" width="1" height="1" fill="#ffff00"/>
<rect x="54" y="67" width="1" height="1" fill="#000000"/>
<rect x="55" y="67" width="9" height="1" fill="#808000"/>
<rect x="64" y="67" width="1" height="1" fill="#000000"/>
<rect x="52" y="68" width="2" height="1" fill="#000000"/>
<rect x="54" y="68" width="9" height="1" fill="#808000"/>
<rect x="63" y="68" width="1" height="1" fill="#000000"/>
<rect x="52" y="69" width="11" height="1" fill="#000000"/>
<rect x="62" y="56" width="3" height="1" fill="#000000"/>
<rect x="59" y="57" width="1" height="1" fill="#000000"/>
<rect x="61" y="57" width="1" height="1" fill="#000000"/>
<rect x="65" y="57" width="1" height="1" fill="#000000"/>
<rect x="59" y="58" width="2" height="1" fill="#000000"/>
<rect x="59" y="59" width="3" height="1" fill="#000000"/>
<rect x="72" y="56" width="14" height="13" fill="#000"/>
<rect x="73" y="57" width="12" height="3" fill="#ffc010"/>
<rect x="73" y="57" width="12" height="1" fill="#ffd850"/>
<rect x="73" y="59" width="12" height="1" fill="#ffcc30"/>
<rect x="78" y="58" width="2" height="1" fill="#000"/>
<rect x="73" y="61" width="12" height="3" fill="#ffc010"/>
<rect x="73" y="61" width="12" height="1" fill="#ffd850"/>
<rect x="73" y="63" width="12" height="1" fill="#ffcc30"/>
<rect x="78" y="62" width="2" height="1" fill="#000"/>
<rect x="73" y="65" width="12" height="3" fill="#ffc010"/>
<rect x="73" y="65" width="12" height="1" fill="#ffd850"/>
<rect x="73" y="67" width="12" height="1" fill="#ffcc30"/>
<rect x="78" y="66" width="2" height="1" fill="#000"/>
<rect x="73" y="69" width="1" height="1" fill="#000"/>
<rect x="84" y="69" width="1" height="1" fill="#000"/>
<path d="M94.5,57.5 H100.5 L103.5,60.5 V68.5 H94.5 Z" fill="#fff" stroke="#000"/>
<path d="M100.5,57.5 V60.5 H103.5" fill="none" stroke="#000"/>
<path d="M93.5,57.5 L103.5,67.5 M104.5,57.5 L94.5,69.5" stroke="#ff0000" stroke-width="1.7" fill="none" shape-rendering="auto"/>
<rect x="127" y="56" width="6" height="1" fill="#000000"/>
<rect x="124" y="57" width="6" height="1" fill="#000000"/>
<rect x="130" y="57" width="1" height="1" fill="#00a000"/>
<rect x="131" y="57" width="1" height="1" fill="#ffffff"/>
<rect x="132" y="57" width="2" height="1" fill="#000000"/>
<rect x="124" y="58" width="1" height="1" fill="#000000"/>
<rect x="125" y="58" width="1" height="1" fill="#e8e000"/>
<rect x="126" y="58" width="2" height="1" fill="#ffffff"/>
<rect x="128" y="58" width="2" height="1" fill="#000000"/>
<rect x="130" y="58" width="1" height="1" fill="#ffffff"/>
<rect x="131" y="58" width="1" height="1" fill="#000000"/>
<rect x="132" y="58" width="2" height="1" fill="#ffffff"/>
<rect x="134" y="58" width="1" height="1" fill="#000000"/>
<rect x="124" y="59" width="1" height="1" fill="#000000"/>
<rect x="125" y="59" width="2" height="1" fill="#ffffff"/>
<rect x="127" y="59" width="1" height="1" fill="#e8e000"/>
<rect x="128" y="59" width="2" height="1" fill="#000000"/>
<rect x="130" y="59" width="1" height="1" fill="#ffffff"/>
<rect x="131" y="59" width="2" height="1" fill="#000000"/>
<rect x="133" y="59" width="2" height="1" fill="#ffffff"/>
<rect x="135" y="59" width="1" height="1" fill="#000000"/>
<rect x="122" y="60" width="6" height="1" fill="#000000"/>
<rect x="128" y="60" width="1" height="1" fill="#ffffff"/>
<rect x="129" y="60" width="1" height="1" fill="#000000"/>
<rect x="130" y="60" width="2" height="1" fill="#ffffff"/>
<rect x="132" y="60" width="1" height="1" fill="#000000"/>
<rect x="133" y="60" width="1" height="1" fill="#00a000"/>
<rect x="134" y="60" width="1" height="1" fill="#ffffff"/>
<rect x="135" y="60" width="1" height="1" fill="#000000"/>
<rect x="122" y="61" width="1" height="1" fill="#000000"/>
<rect x="123" y="61" width="4" height="1" fill="#ffffff"/>
<rect x="127" y="61" width="2" height="1" fill="#000000"/>
<rect x="129" y="61" width="1" height="1" fill="#ffffff"/>
<rect x="130" y="61" width="1" height="1" fill="#000000"/>
<rect x="131" y="61" width="1" height="1" fill="#ffffff"/>
<rect x="132" y="61" width="1" height="1" fill="#000000"/>
<rect x="133" y="61" width="1" height="1" fill="#ffffff"/>
<rect x="134" y="61" width="1" height="1" fill="#00a000"/>
<rect x="135" y="61" width="1" height="1" fill="#000000"/>
<rect x="122" y="62" width="1" height="1" fill="#000000"/>
<rect x="123" y="62" width="1" height="1" fill="#ffffff"/>
<rect x="124" y="62" width="1" height="1" fill="#000000"/>
<rect x="125" y="62" width="2" height="1" fill="#ffffff"/>
<rect x="127" y="62" width="1" height="1" fill="#000000"/>
<rect x="128" y="62" width="1" height="1" fill="#ffffff"/>
<rect x="129" y="62" width="1" height="1" fill="#000000"/>
<rect x="130" y="62" width="1" height="1" fill="#e8e000"/>
<rect x="131" y="62" width="1" height="1" fill="#ffffff"/>
<rect x="132" y="62" width="1" height="1" fill="#000000"/>
<rect x="133" y="62" width="1" height="1" fill="#00a000"/>
<rect x="134" y="62" width="1" height="1" fill="#ffffff"/>
<rect x="135" y="62" width="1" height="1" fill="#000000"/>
<rect x="122" y="63" width="1" height="1" fill="#000000"/>
<rect x="123" y="63" width="4" height="1" fill="#ffffff"/>
<rect x="127" y="63" width="4" height="1" fill="#000000"/>
<rect x="131" y="63" width="1" height="1" fill="#ffffff"/>
<rect x="132" y="63" width="1" height="1" fill="#000000"/>
<rect x="133" y="63" width="1" height="1" fill="#ffffff"/>
<rect x="134" y="63" width="1" height="1" fill="#00a000"/>
<rect x="135" y="63" width="1" height="1" fill="#000000"/>
<rect x="122" y="64" width="1" height="1" fill="#000000"/>
<rect x="123" y="64" width="1" height="1" fill="#ffffff"/>
<rect x="124" y="64" width="2" height="1" fill="#000000"/>
<rect x="126" y="64" width="4" height="1" fill="#ffffff"/>
<rect x="130" y="64" width="1" height="1" fill="#000000"/>
<rect x="131" y="64" width="1" height="1" fill="#ffffff"/>
<rect x="132" y="64" width="1" height="1" fill="#000000"/>
<rect x="133" y="64" width="1" height="1" fill="#00a000"/>
<rect x="134" y="64" width="1" height="1" fill="#ffffff"/>
<rect x="135" y="64" width="1" height="1" fill="#000000"/>
<rect x="122" y="65" width="1" height="1" fill="#000000"/>
<rect x="123" y="65" width="7" height="1" fill="#ffffff"/>
<rect x="130" y="65" width="1" height="1" fill="#000000"/>
<rect x="131" y="65" width="1" height="1" fill="#ffffff"/>
<rect x="132" y="65" width="1" height="1" fill="#000000"/>
<rect x="133" y="65" width="1" height="1" fill="#ffffff"/>
<rect x="134" y="65" width="1" height="1" fill="#00a000"/>
<rect x="135" y="65" width="1" height="1" fill="#000000"/>
<rect x="122" y="66" width="1" height="1" fill="#000000"/>
<rect x="123" y="66" width="1" height="1" fill="#ffffff"/>
<rect x="124" y="66" width="5" height="1" fill="#000000"/>
<rect x="129" y="66" width="1" height="1" fill="#ffffff"/>
<rect x="130" y="66" width="1" height="1" fill="#000000"/>
<rect x="131" y="66" width="1" height="1" fill="#ffffff"/>
<rect x="132" y="66" width="4" height="1" fill="#000000"/>
<rect x="122" y="67" width="1" height="1" fill="#000000"/>
<rect x="123" y="67" width="7" height="1" fill="#ffffff"/>
<rect x="130" y="67" width="3" height="1" fill="#000000"/>
<rect x="122" y="68" width="1" height="1" fill="#000000"/>
<rect x="123" y="68" width="1" height="1" fill="#ffffff"/>
<rect x="124" y="68" width="1" height="1" fill="#000000"/>
<rect x="125" y="68" width="1" height="1" fill="#ffffff"/>
<rect x="126" y="68" width="1" height="1" fill="#000000"/>
<rect x="127" y="68" width="1" height="1" fill="#ffffff"/>
<rect x="128" y="68" width="1" height="1" fill="#000000"/>
<rect x="129" y="68" width="1" height="1" fill="#ffffff"/>
<rect x="130" y="68" width="1" height="1" fill="#000000"/>
<rect x="122" y="69" width="1" height="1" fill="#000000"/>
<rect x="123" y="69" width="7" height="1" fill="#ffffff"/>
<rect x="130" y="69" width="1" height="1" fill="#000000"/>
<rect x="122" y="70" width="9" height="1" fill="#000000"/>
<rect x="155" y="56" width="3" height="9" fill="#1c1488"/>
<rect x="152" y="59" width="9" height="3" fill="#1c1488"/>
<rect x="158" y="63" width="2" height="1" fill="#000000"/>
<rect x="161" y="63" width="2" height="1" fill="#000000"/>
<rect x="164" y="63" width="3" height="1" fill="#000000"/>
<rect x="157" y="64" width="1" height="1" fill="#000000"/>
<rect x="166" y="64" width="1" height="1" fill="#000000"/>
<rect x="157" y="67" width="1" height="1" fill="#000000"/>
<rect x="166" y="67" width="1" height="1" fill="#000000"/>
<rect x="157" y="68" width="1" height="1" fill="#000000"/>
<rect x="166" y="68" width="1" height="1" fill="#000000"/>
<rect x="157" y="69" width="2" height="1" fill="#000000"/>
<rect x="161" y="69" width="2" height="1" fill="#000000"/>
<rect x="165" y="69" width="2" height="1" fill="#000000"/>
<rect x="159" y="65" width="6" height="3" fill="#ff9810"/>
<rect x="179" y="55" width="1" height="1" fill="#000000"/>
<rect x="181" y="55" width="1" height="1" fill="#000000"/>
<rect x="180" y="56" width="1" height="1" fill="#000000"/>
<rect x="179" y="57" width="2" height="1" fill="#000000"/>
<rect x="178" y="58" width="7" height="1" fill="#000000"/>
<rect x="185" y="58" width="2" height="1" fill="#1c1488"/>
<rect x="177" y="59" width="1" height="1" fill="#ffcc88"/>
<rect x="178" y="59" width="2" height="1" fill="#000000"/>
<rect x="180" y="59" width="5" height="1" fill="#ffffff"/>
<rect x="185" y="59" width="2" height="1" fill="#1c1488"/>
<rect x="172" y="60" width="3" height="1" fill="#000000"/>
<rect x="176" y="60" width="1" height="1" fill="#000000"/>
<rect x="177" y="60" width="1" height="1" fill="#ffcc88"/>
<rect x="178" y="60" width="1" height="1" fill="#000000"/>
<rect x="179" y="60" width="1" height="1" fill="#ffcc88"/>
<rect x="180" y="60" width="1" height="1" fill="#000000"/>
<rect x="181" y="60" width="4" height="1" fill="#ffcc88"/>
<rect x="185" y="60" width="2" height="1" fill="#1c1488"/>
<rect x="175" y="61" width="1" height="1" fill="#000000"/>
<rect x="176" y="61" width="1" height="1" fill="#ffcc88"/>
<rect x="177" y="61" width="1" height="1" fill="#000000"/>
<rect x="178" y="61" width="1" height="1" fill="#ffcc88"/>
<rect x="179" y="61" width="1" height="1" fill="#000000"/>
<rect x="180" y="61" width="1" height="1" fill="#ffcc88"/>
<rect x="181" y="61" width="1" height="1" fill="#000000"/>
<rect x="182" y="61" width="3" height="1" fill="#ffcc88"/>
<rect x="185" y="61" width="2" height="1" fill="#1c1488"/>
<rect x="172" y="62" width="2" height="1" fill="#000000"/>
<rect x="176" y="62" width="1" height="1" fill="#000000"/>
<rect x="177" y="62" width="1" height="1" fill="#ffcc88"/>
<rect x="178" y="62" width="1" height="1" fill="#000000"/>
<rect x="179" y="62" width="1" height="1" fill="#ffcc88"/>
<rect x="180" y="62" width="1" height="1" fill="#000000"/>
<rect x="181" y="62" width="1" height="1" fill="#ffcc88"/>
<rect x="182" y="62" width="1" height="1" fill="#000000"/>
<rect x="183" y="62" width="2" height="1" fill="#ffcc88"/>
<rect x="185" y="62" width="2" height="1" fill="#1c1488"/>
<rect x="177" y="63" width="1" height="1" fill="#ffcc88"/>
<rect x="178" y="63" width="1" height="1" fill="#000000"/>
<rect x="179" y="63" width="1" height="1" fill="#ffcc88"/>
<rect x="180" y="63" width="1" height="1" fill="#000000"/>
<rect x="181" y="63" width="1" height="1" fill="#ffcc88"/>
<rect x="182" y="63" width="3" height="1" fill="#000000"/>
<rect x="185" y="63" width="2" height="1" fill="#1c1488"/>
<rect x="176" y="64" width="1" height="1" fill="#000000"/>
<rect x="178" y="64" width="1" height="1" fill="#000000"/>
<rect x="179" y="64" width="1" height="1" fill="#ffcc88"/>
<rect x="180" y="64" width="1" height="1" fill="#000000"/>
<rect x="185" y="64" width="2" height="1" fill="#1c1488"/>
<rect x="172" y="65" width="4" height="1" fill="#ff0000"/>
<rect x="176" y="65" width="1" height="1" fill="#000000"/>
<rect x="177" y="65" width="2" height="1" fill="#ff0000"/>
<rect x="180" y="65" width="1" height="1" fill="#000000"/>
<rect x="185" y="65" width="2" height="1" fill="#1c1488"/>
<rect x="172" y="66" width="3" height="1" fill="#ff0000"/>
<rect x="175" y="66" width="1" height="1" fill="#000000"/>
<rect x="176" y="66" width="3" height="1" fill="#ff0000"/>
<rect x="172" y="68" width="4" height="1" fill="#000000"/>
<rect x="178" y="68" width="1" height="1" fill="#000000"/>
<rect x="192" y="58" width="2" height="1" fill="#000000"/>
<rect x="192" y="59" width="1" height="1" fill="#000000"/>
<rect x="192" y="60" width="1" height="1" fill="#000000"/>
<rect x="192" y="62" width="1" height="1" fill="#000000"/>
<rect x="192" y="63" width="1" height="1" fill="#000000"/>
<rect x="192" y="64" width="1" height="1" fill="#000000"/>
<rect x="192" y="67" width="1" height="1" fill="#000000"/>
<rect x="203" y="67" width="1" height="1" fill="#000000"/>
<rect x="192" y="68" width="1" height="1" fill="#000000"/>
<rect x="203" y="68" width="1" height="1" fill="#000000"/>
<rect x="192" y="69" width="2" height="1" fill="#000000"/>
<rect x="196" y="69" width="4" height="1" fill="#000000"/>
<rect x="202" y="69" width="2" height="1" fill="#000000"/>
<rect x="194" y="60" width="8" height="8" fill="#ff9810"/>
<path d="M197.5,57.5 L206.5,65.5 M205.5,56.5 L196.5,65.5" stroke="#ff0000" stroke-width="1.6" stroke-linecap="round" fill="none" shape-rendering="auto"/>
<path d="M224,63 L224,60.6 Q224.6,58 228,58 L228,56 L232.3,59.5 L228,63 L228,61 Q226.8,61 227,63 Z" fill="#1c1488" shape-rendering="auto"/>
<path d="M224,63 L224,60.6 Q224.6,58 228,58 L228,56 L232.3,59.5 L228,63 L228,61 Q226.8,61 227,63 Z" fill="#1c1488" shape-rendering="auto" transform="rotate(180 228.75 63)"/>
<rect x="830" y="55" width="16" height="16" fill="#ffffff"/>
<rect x="836" y="55" width="7" height="13" fill="#666"/>
<rect x="838" y="57" width="3" height="10" fill="#888"/>
<polygon points="840,59 844.5,55.5 844.5,71 840,68.5" fill="#1ab3b3" stroke="#0a7070" stroke-width="0.5" shape-rendering="auto"/>
<polygon points="831,61 835,61 835,58 839,62.5 835,67 835,64 831,64" fill="#1ab3b3" stroke="#0a7070" stroke-width="0.5" shape-rendering="auto"/>
<rect x="831" y="67" width="6" height="1" fill="#888"/>
<rect x="832" y="61" width="3" height="1" fill="#a8d0ff"/>
<rect x="836" y="60" width="1" height="3" fill="#a8d0ff"/>
<rect x="842" y="58" width="2" height="1" fill="#0c7c7c"/>
<rect x="842" y="60" width="2" height="1" fill="#0c7c7c"/>
<rect x="842" y="62" width="2" height="1" fill="#0c7c7c"/>
<rect x="842" y="64" width="2" height="1" fill="#0c7c7c"/>
<rect x="842" y="66" width="2" height="1" fill="#0c7c7c"/>
</svg>
<div id="lt">
<div class="t p" style="left:38px;top:203px;line-height:20px;letter-spacing:0.228px;">Параметры договора</div>
<div class="t p" style="left:38px;top:223px;line-height:20px;letter-spacing:0.100px;">Группа тарифов</div>
<div class="t p" style="left:38px;top:243px;line-height:20px;letter-spacing:0.276px;">Скрипт поведения</div>
<div class="t p" style="left:38px;top:263px;line-height:20px;letter-spacing:0.412px;">Пароль</div>
<div class="t p" style="left:38px;top:283px;line-height:20px;letter-spacing:0.292px;">Лимит</div>
<div class="t p" style="left:141px;width:88.6px;text-align:right;top:283px;line-height:20px;letter-spacing:0.2px">0</div>
<div class="t p" style="left:38px;top:303px;line-height:20px;letter-spacing:0.750px;">Режим</div>
<div class="t p" style="left:141px;width:88.9px;text-align:right;top:303px;line-height:20px;letter-spacing:0.5px">кредит</div>
<div class="t p" style="left:38px;top:323px;line-height:20px;letter-spacing:0.463px;">Группы</div>
<div class="t p" style="left:58px;top:343px;line-height:20px;">B</div>
<div class="t p" style="left:58px;top:363px;line-height:20px;">E</div>
<div class="t p" style="left:58px;top:383px;line-height:20px;">F</div>
<div class="t p" style="left:38px;top:403px;line-height:20px;letter-spacing:0.176px;">Тарифные планы</div>
<div class="t p" style="left:58px;top:423px;line-height:20px;letter-spacing:0.265px;">Персональный: ы</div>
<div class="t p" style="left:38px;top:443px;line-height:20px;letter-spacing:0.188px;">Баланс</div>
<div class="t p" style="left:58px;top:463px;line-height:20px;letter-spacing:0.053px;">Входящий остаток</div>
<div class="t p" style="left:141px;width:88.8px;text-align:right;top:463px;line-height:20px;letter-spacing:0.4px">-515.07</div>
<div class="t p" style="left:58px;top:483px;line-height:20px;letter-spacing:0.384px;">Приход</div>
<div class="t p" style="left:141px;width:88.6px;text-align:right;top:483px;line-height:20px;letter-spacing:0.2px">0.00</div>
<div class="t p" style="left:58px;top:503px;line-height:20px;letter-spacing:0.330px;">Наработка</div>
<div class="t p" style="left:141px;width:88.7px;text-align:right;top:503px;line-height:20px;letter-spacing:0.3px">283.00</div>
</div>
<div id="tx">
<div class="t b" style="left:23.5px;top:5px;color:#fff;font-size:11px;line-height:16px;letter-spacing:0.113px;">"BG - биллинг"</div>
<div class="t b" style="left:110.0px;top:5px;color:#fff;font-size:11px;line-height:16px;letter-spacing:1.528px;">-</div>
<div class="t b" style="left:118.3px;top:5px;color:#fff;font-size:11px;line-height:16px;letter-spacing:0.118px;">универсальная</div>
<div class="t b" style="left:210.1px;top:5px;color:#fff;font-size:11px;line-height:16px;letter-spacing:-0.225px;">биллинговая</div>
<div class="t b" style="left:287.5px;top:5px;color:#fff;font-size:11px;line-height:16px;letter-spacing:0.355px;">система</div>
<div class="t b" style="left:338.1px;top:5px;color:#fff;font-size:11px;line-height:16px;letter-spacing:0.303px;">(вер.</div>
<div class="t b" style="left:369.5px;top:5px;color:#fff;font-size:11px;line-height:16px;letter-spacing:0.802px;">3.7</div>
<div class="t b" style="left:389.5px;top:5px;color:#fff;font-size:11px;line-height:16px;letter-spacing:1.856px;">от</div>
<div class="t b" style="left:406.2px;top:5px;color:#fff;font-size:11px;line-height:16px;letter-spacing:0.878px;">04.04.2006)</div>
<div class="t b" style="left:476.8px;top:5px;color:#fff;font-size:11px;line-height:16px;letter-spacing:-0.460px;">UFANET</div>
<div class="t b" style="left:9.5px;top:27px;letter-spacing:-0.230px;">Договор</div>
<div class="t b" style="left:70.0px;top:27px;letter-spacing:0.049px;">Модули</div>
<div class="t b" style="left:129.5px;top:27px;letter-spacing:-0.246px;">Справочники</div>
<div class="t b" style="left:218.0px;top:27px;letter-spacing:-0.182px;">Сервис</div>
<div class="t b" style="left:273.0px;top:27px;letter-spacing:-0.248px;">Автоматизация</div>
<div class="t b" style="left:373.5px;top:27px;letter-spacing:-1.191px;">Утилиты</div>
<div class="t b" style="left:435.5px;top:27px;letter-spacing:-0.131px;">Справка</div>
<div class="t b" style="left:249px;top:55px;letter-spacing:-0.536px;">БД:</div>
<div class="t b" style="left:277px;top:55px;letter-spacing:-0.161px;">Local</div>
<div class="t b" style="left:24px;top:93px;letter-spacing:-0.120px;">Параметры</div>
<div class="t b" style="left:111px;top:93px;letter-spacing:-0.050px;">Журнал</div>
<div class="t b" style="left:178px;top:93px;letter-spacing:-0.345px;">Отчет</div>
<div class="t b" style="left:233px;top:93px;letter-spacing:-0.246px;">Карточки</div>
<div class="t b" style="left:30px;top:119px;letter-spacing:-0.263px;">Договор</div>
<div class="t b" style="left:613px;top:119px;letter-spacing:-0.059px;">Период</div>
<div class="t p" style="left:29px;top:144px;font-size:14.67px;line-height:18px;letter-spacing:0.036px;">x0000 (Иванов Петр Сидорович)</div>
<div class="t b" style="left:572px;top:146px;color:#cc0000;">...</div>
<div class="t b" style="left:612px;top:145px;">с</div>
<div class="t b" style="left:637.3px;top:145px;letter-spacing:0.304px;">03.08.2003</div>
<div class="t b" style="left:718px;top:145px;letter-spacing:0.122px;">по</div>
<div class="t b" style="left:38px;top:520px;">Скрытый</div>
<div class="t b" style="left:266px;top:191px;letter-spacing:-0.057px;">Глобальные тарифы</div>
<div class="t b" style="left:411px;top:191px;letter-spacing:-0.077px;">Персональные тарифы</div>
<div class="t p" style="left:256px;top:213px;width:300px;text-align:center;">Наименование</div>
<div class="t p" style="left:556px;top:213px;width:150px;text-align:center;">Период действия</div>
<div class="t p" style="left:706px;top:213px;width:128px;overflow:hidden;text-indent:63px;">Комментарий</div>
<div class="t p" style="left:257px;top:228px;">Тестовый</div>
<div class="t p" style="left:557px;top:228px;">01.01.2006-31.03.2006</div>
<div class="t b" style="left:31px;top:551px;letter-spacing:-0.107px;">Редактор тарифных планов</div>
<div class="t b" style="left:232px;top:551px;letter-spacing:-0.204px;">Поиск договоров</div>
<div class="t b" style="left:368px;top:553px;letter-spacing:0.206px;">x0000</div>
</div>
</div>
</body></html>
